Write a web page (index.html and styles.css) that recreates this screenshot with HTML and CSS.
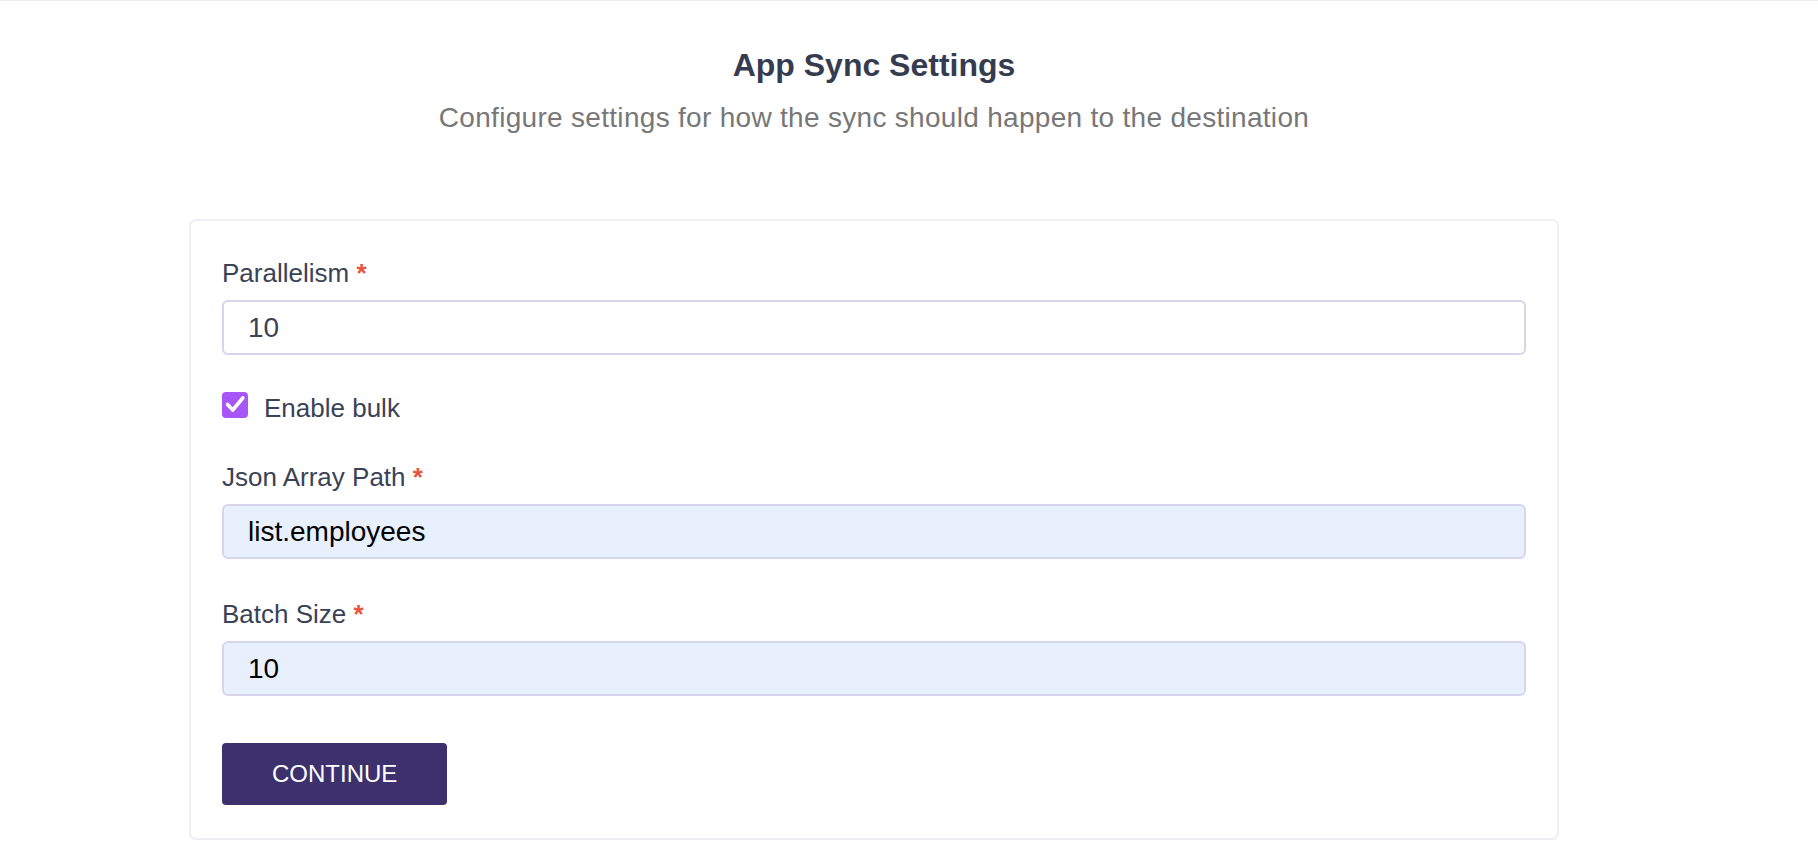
FILE: index.html
```html
<!DOCTYPE html>
<html lang="en">
<head>
<meta charset="utf-8">
<title>App Sync Settings</title>
<link rel="stylesheet" href="styles.css">
</head>
<body>
<div class="topline"></div>
<main class="page">
  <header class="head">
    <h1 class="title">App Sync Settings</h1>
    <p class="subtitle">Configure settings for how the sync should happen to the destination</p>
  </header>
  <section class="card">
    <div class="field">
      <label class="label">Parallelism <span class="req">*</span></label>
      <input class="input" type="text" value="10">
    </div>
    <label class="check-row">
      <span class="checkbox">
        <svg width="26" height="26" viewBox="0 0 26 26"><polyline points="5.5,12.5 10.8,18 20.8,6" fill="none" stroke="#fff" stroke-width="3.6" stroke-linecap="round" stroke-linejoin="round"/></svg>
      </span>
      <span class="check-text">Enable bulk</span>
    </label>
    <div class="field field-json">
      <label class="label">Json Array Path <span class="req">*</span></label>
      <input class="input autofilled" type="text" value="list.employees">
    </div>
    <div class="field">
      <label class="label">Batch Size <span class="req">*</span></label>
      <input class="input autofilled" type="text" value="10">
    </div>
    <button class="btn" type="button">CONTINUE</button>
  </section>
</main>
</body>
</html>
```

FILE: styles.css
```css
* { box-sizing: border-box; }
html, body { margin: 0; padding: 0; background: #ffffff; }
body {
  font-family: "Liberation Sans", Arial, Helvetica, sans-serif;
  color: #3a4256;
  width: 1818px;
  height: 842px;
  overflow: hidden;
}
.topline { height: 1px; background: #ededed; }
.page {
  padding: 0 259px 0 189px;
}
.head {
  display: flex;
  flex-direction: column;
  align-items: center;
  padding-top: 44px;
}
.title {
  margin: 0;
  font-size: 32px;
  line-height: 40px;
  font-weight: 700;
  color: #363c50;
}
.subtitle {
  margin: 16px 0 0;
  font-size: 28px;
  line-height: 34px;
  letter-spacing: 0.3px;
  color: #777777;
}
.card {
  margin-top: 84px;
  width: 1370px;
  border: 2px solid #eeeff4;
  border-radius: 7px;
  padding: 37px 31px 33px;
  display: flex;
  flex-direction: column;
  align-items: flex-start;
}
.field {
  width: 100%;
  display: flex;
  flex-direction: column;
  gap: 12px;
}
.label {
  font-size: 26px;
  line-height: 30px;
  color: #3a4256;
}
.req { color: #e8553f; font-weight: 700; }
.input {
  -webkit-appearance: none;
  appearance: none;
  width: 100%;
  height: 55px;
  border: 2px solid #d6d5eb;
  border-radius: 6px;
  padding: 0 24px;
  font-family: "Liberation Sans", Arial, Helvetica, sans-serif;
  font-size: 28px;
  color: #3a4256;
  background: #ffffff;
  outline: none;
}
.input.autofilled { background: #e8f0fe; color: #000000; }
.check-row {
  margin-top: 38px;
  display: flex;
  align-items: flex-start;
  gap: 16px;
  font-size: 26px;
  line-height: 30px;
}
.checkbox {
  margin-top: -1px;
  width: 26px;
  height: 26px;
  border-radius: 4px;
  background: #a656f6;
  display: flex;
}
.check-text { color: #3a4256; }
.field-json { margin-top: 39px; }
.field-json + .field { margin-top: 40px; }
.btn {
  margin-top: 47px;
  height: 62px;
  padding: 0 50px;
  border: none;
  border-radius: 4px;
  background: #3c316d;
  color: #ffffff;
  font-family: "Liberation Sans", Arial, Helvetica, sans-serif;
  font-size: 24px;
}
```
